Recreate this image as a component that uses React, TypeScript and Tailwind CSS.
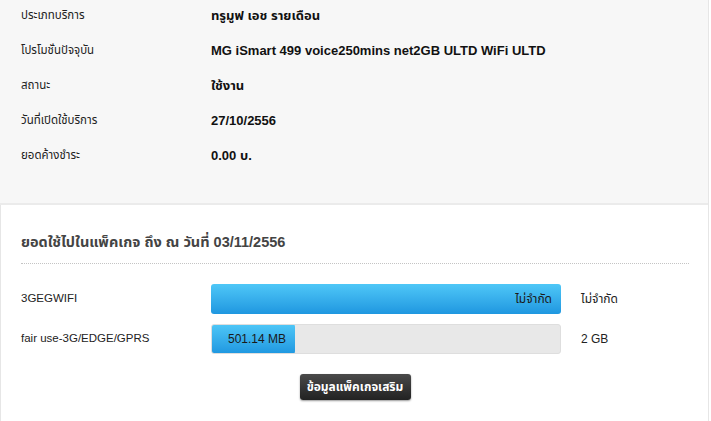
import React from "react";

const font = { fontFamily: '"Liberation Sans", "Noto Sans Thai", "Noto Sans", "DejaVu Sans", sans-serif' };

const info: [string, string][] = [
  ["ประเภทบริการ", "ทรูมูฟ เอช รายเดือน"],
  ["โปรโมชั่นปัจจุบัน", "MG iSmart 499 voice250mins net2GB ULTD WiFi ULTD"],
  ["สถานะ", "ใช้งาน"],
  ["วันที่เปิดใช้บริการ", "27/10/2556"],
  ["ยอดค้างชำระ", "0.00 บ."],
];

export default function App() {
  return (
    <div className="w-[711px] h-[421px] bg-white overflow-hidden text-[#1a1a1a]" style={font}>
      <div className="w-[709px] h-full border-r border-[#e6e6e6] flex flex-col">
        <div className="bg-[#f7f7f7] border-b-2 border-[#ebebeb] pt-[6px] pb-[37px] flex flex-col gap-[15px]">
          {info.map(([k, v]) => (
            <div key={k} className="flex h-[20px] items-center">
              <div className="w-[211px] pl-[21px] text-[11.5px] text-[#222]">{k}</div>
              <div className="text-[13px] font-bold text-[#111]">{v}</div>
            </div>
          ))}
        </div>
        <div className="flex-1 border-l border-[#e6e6e6] pl-[20px] pr-[19px] pt-[28px]">
          <div className="h-[20px] flex items-center text-[14.5px] font-bold text-[#444]">
            ยอดใช้ไปในแพ็คเกจ ถึง ณ วันที่ 03/11/2556
          </div>
          <div className="mt-[10px] border-b border-dotted border-[#c4c4c4]"></div>
          <div className="mt-[20px] flex flex-col gap-[10px]">
            <div className="flex items-center h-[30px]">
              <div className="w-[190px] text-[11.5px] text-[#222]">3GEGWIFI</div>
              <div className="w-[350px] h-[30px] rounded-[3px] bg-gradient-to-b from-[#4ec7f7] to-[#1e97e0] flex items-center justify-end pr-[9px] text-[12px] text-[#1a1a1a]">
                ไม่จำกัด
              </div>
              <div className="ml-[20px] text-[12px] text-[#222]">ไม่จำกัด</div>
            </div>
            <div className="flex items-center h-[30px]">
              <div className="w-[190px] text-[11.5px] text-[#222]">fair use-3G/EDGE/GPRS</div>
              <div className="w-[350px] h-[30px] rounded-[3px] bg-[#e8e8e8] border border-[#dedede] flex overflow-hidden">
                <div className="w-[84px] rounded-[3px] bg-gradient-to-b from-[#4ec7f7] to-[#1e97e0] flex items-center justify-end pr-[9px] text-[12px] text-[#1a1a1a] -ml-px -mt-px h-[30px] shrink-0">
                  501.14 MB
                </div>
              </div>
              <div className="ml-[20px] text-[12px] text-[#222]">2 GB</div>
            </div>
          </div>
          <div className="mt-[20px] flex justify-center">
            <button className="w-[111px] h-[26px] rounded-[3px] bg-gradient-to-b from-[#4a4a4a] to-[#222] text-white text-[12px] font-bold shadow-[0_1px_2px_rgba(0,0,0,0.4)]">
              ข้อมูลแพ็คเกจเสริม
            </button>
          </div>
        </div>
      </div>
    </div>
  );
}
